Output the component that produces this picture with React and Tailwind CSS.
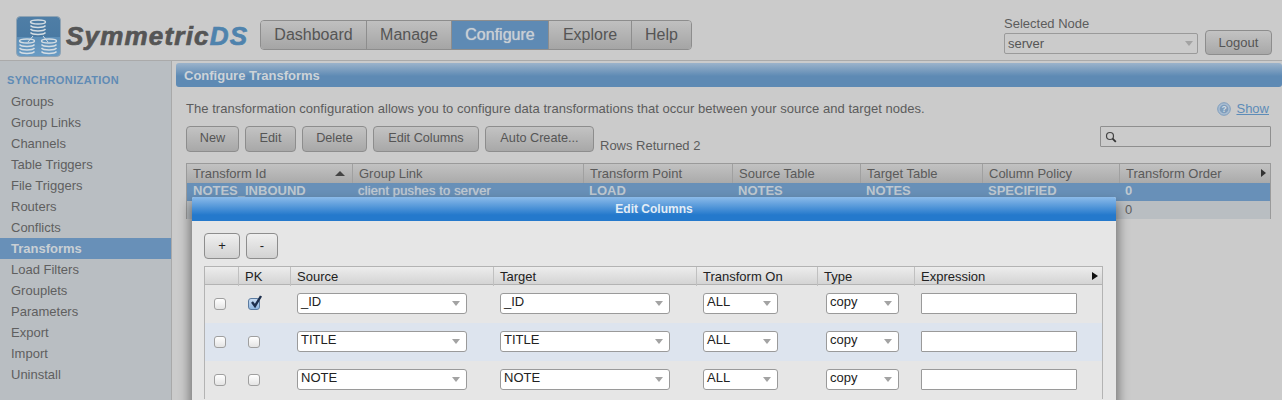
import React from "react";

const sidebarItems = ["Groups","Group Links","Channels","Table Triggers","File Triggers","Routers","Conflicts","Transforms","Load Filters","Grouplets","Parameters","Export","Import","Uninstall"];
const navItems = [["Dashboard","w-[105px]"],["Manage","w-[85px]"],["Configure","w-[97px]"],["Explore","w-[83px]"],["Help","w-[60px]"]];
const actions = [["New","w-[53px]"],["Edit","w-[51px]"],["Delete","w-[65px]"],["Edit Columns","w-[106px]"],["Auto Create...","w-[109px]"]];
const mainCols = ["Transform Id","Group Link","Transform Point","Source Table","Target Table","Column Policy","Transform Order"];
const mainRow = ["NOTES_INBOUND","client pushes to server","LOAD","NOTES","NOTES","SPECIFIED","0"];
const mainGrid = "grid grid-cols-[165px_231px_149px_128px_122px_137px_1fr]";
const editGrid = "grid grid-cols-[33px_52px_203px_203px_121px_97px_1fr]";

function Stack({ x, y }) {
  return (
    <g fill="none" stroke="#d5dde3" strokeWidth="1.4">
      <ellipse cx={x} cy={y} rx="7.5" ry="2" />
      <path d={`M${x-7.5} ${y+3.5}c2 2.6 13 2.6 15 0M${x-7.5} ${y+7}c2 2.6 13 2.6 15 0M${x-7.5} ${y+10.5}c2 2.6 13 2.6 15 0`} />
    </g>
  );
}

function Logo() {
  return (
    <div className="flex items-center w-[244px]">
      <svg width="45" height="41" viewBox="0 0 45 41" className="shrink-0">
        <defs>
          <linearGradient id="lg" x1="0" y1="0" x2="0" y2="1">
            <stop offset="0" stopColor="#4f7ea6" />
            <stop offset="0.5" stopColor="#4a7aa3" />
            <stop offset="0.52" stopColor="#5d8fb8" />
            <stop offset="1" stopColor="#6a9cc4" />
          </linearGradient>
        </defs>
        <rect x="0.5" y="0.5" width="44" height="40" rx="4" fill="url(#lg)" stroke="#8fa3b3" />
        <Stack x={22} y={6} />
        <Stack x={11} y={25} />
        <Stack x={33} y={25} />
        <path d="M17 20l-5 6M27 20l5 6" stroke="#d5dde3" strokeWidth="1" fill="none" />
      </svg>
      <span className="ml-[5px] text-[26px] leading-none font-bold italic tracking-[1.2px] text-[#555] [-webkit-text-stroke:0.7px_#555] font-['Liberation_Sans',sans-serif] whitespace-nowrap">
        Symmetric<span className="text-[#4f83ad] [-webkit-text-stroke:0.7px_#4f83ad]">DS</span>
      </span>
    </div>
  );
}

function Caret({ className = "" }) {
  return <span className={`w-0 h-0 border-l-[4.5px] border-r-[4.5px] border-t-[5px] border-l-transparent border-r-transparent border-t-[#a3a3a3] ${className}`} />;
}

function Btn({ children, className = "" }) {
  return (
    <button className={`h-[26px] rounded-[4px] border border-[#8d8d8d] bg-gradient-to-b from-[#c3c3c3] to-[#a8a8a8] text-[13px] text-[#555] flex items-center justify-center shrink-0 ${className}`}>
      {children}
    </button>
  );
}

function FakeSelect({ value, className }) {
  return (
    <div className={`h-[21px] bg-white border border-[#9a9a9a] rounded-[3px] flex items-center justify-between pl-[3px] pr-[6px] text-[13px] leading-none text-[#222] pb-[4px] ${className}`}>
      <span>{value}</span>
      <Caret className="mt-[3px]" />
    </div>
  );
}

function Check({ checked }) {
  return (
    <span className={`relative block w-[12px] h-[12px] rounded-[3px] border ${checked ? "bg-gradient-to-b from-[#c9dcf2] to-[#8fb6e0] border-[#5b7ba0]" : "bg-gradient-to-b from-[#ffffff] to-[#e4e4e4] border-[#9f9f9f]"}`}>
      {checked && (
        <svg viewBox="0 0 14 14" className="absolute left-[0px] top-[-4px] w-[14px] h-[14px]">
          <path d="M3 7l3 4 6-10" fill="none" stroke="#1d2f4d" strokeWidth="2.4" />
        </svg>
      )}
    </span>
  );
}

function EditRow({ value, pk, shaded }) {
  return (
    <div className={`${editGrid} h-[38px] items-center ${shaded ? "bg-[#dde4ee]" : ""}`}>
      <div className="pl-[9px]"><Check /></div>
      <div className="pl-[10px] pb-[1px]"><Check checked={pk} /></div>
      <div className="pl-[7px] pb-[1px]"><FakeSelect value={value} className="w-[170px]" /></div>
      <div className="pl-[7px] pb-[1px]"><FakeSelect value={value} className="w-[170px]" /></div>
      <div className="pl-[7px] pb-[1px]"><FakeSelect value="ALL" className="w-[75px]" /></div>
      <div className="pl-[9px] pb-[1px]"><FakeSelect value="copy" className="w-[73px]" /></div>
      <div className="pl-[7px] pb-[1px]"><div className="w-[156px] h-[21px] bg-white border border-[#9a9a9a] rounded-[1px]" /></div>
    </div>
  );
}

export default function App() {
  return (
    <div className="relative w-[1282px] h-[400px] overflow-hidden bg-[#cbcbcb] font-['Liberation_Sans',Arial,sans-serif] text-[#5c5c5c]">
      <header className="h-[60px] flex pl-[16px] pt-[12px]">
        <Logo />
        <nav className="mt-[8px] h-[30px] flex rounded-[4px] border border-[#8d8d8d] overflow-hidden self-start">
          {navItems.map(([label, w], i) => (
            <div key={label} className={`${w} flex items-center justify-center text-[16px] ${i ? "border-l border-[#8d8d8d]" : ""} ${label === "Configure" ? "bg-[#5e8ab4] text-[#c9cfd4] [text-shadow:0_0_1px_#c9cfd4]" : "bg-gradient-to-b from-[#c0c0c0] to-[#a5a5a5] text-[#555]"}`}>
              {label}
            </div>
          ))}
        </nav>
        <div className="ml-[312px] mt-[5px] w-[194px] shrink-0">
          <div className="text-[13px] leading-[14px] mb-[2px] text-[#5c5c5c]">Selected Node</div>
          <div className="h-[21px] border border-[#9a9a9a] rounded-[2px] flex items-center justify-between pl-[3px] pr-[4px] text-[13px] text-[#555]">
            <span>server</span>
            <Caret />
          </div>
        </div>
        <Btn className="ml-[7px] mt-[18px] w-[67px] !h-[25px]">Logout</Btn>
      </header>

      <div className="flex h-[340px] border-t border-[#aaaaaa]">
        <aside className="w-[172px] shrink-0 bg-[#b9bec2] border-r border-[#a9a9a9] pt-[11px]">
          <div className="pl-[7px] h-[17px] text-[11px] leading-[16px] font-bold tracking-[0.4px] text-[#5f8bb5]">SYNCHRONIZATION</div>
          <ul className="mt-[2px]">
            {sidebarItems.map((item) => (
              <li key={item} className={`h-[21px] leading-[21px] pl-[11px] text-[13px] ${item === "Transforms" ? "bg-[#6890b8] font-bold text-[#c9cfd4]" : "text-[#5f5f5f]"}`}>{item}</li>
            ))}
          </ul>
          <div className="pl-[7px] mt-[16px] text-[11px] font-bold tracking-[0.4px] text-[#5f8bb5]">CONSOLE</div>
        </aside>

        <main className="flex-1 min-w-0 pl-[4px] pt-[2px]">
          <div className="h-[24px] rounded-[3px] bg-[linear-gradient(#9bb3cb,#5e8ab4_55%)] pl-[8px] text-[13px] leading-[25px] font-bold text-[#cdd3d8]">Configure Transforms</div>
          <div className="pl-[10px] pr-[11px]">
            <div className="flex justify-between items-center mt-[13px] h-[18px]">
              <p className="text-[13px] tracking-[0.03px]">The transformation configuration allows you to configure data transformations that occur between your source and target nodes.</p>
              <div className="flex items-center gap-[5px] pr-[2px]">
                <svg width="14" height="14" viewBox="0 0 14 14">
                  <circle cx="7" cy="7" r="6.3" fill="#a9bdd2" stroke="#7e9dbd" />
                  <circle cx="7" cy="7" r="4.3" fill="#7f9dbb" />
                  <text x="7" y="10" textAnchor="middle" fontSize="8.5" fontWeight="700" fill="#d5dde5">?</text>
                </svg>
                <a className="text-[13px] underline text-[#5d8cb8]">Show</a>
              </div>
            </div>
            <div className="flex mt-[8px] h-[26px]">
              <div className="flex gap-[6px]">
                {actions.map(([label, w]) => <Btn key={label} className={`${w} !text-[12.7px]`}>{label}</Btn>)}
              </div>
              <span className="ml-[6px] mt-[12px] text-[13px] leading-[16px]">Rows Returned 2</span>
              <div className="ml-auto w-[171px] h-[21px] border border-[#8f8f8f] rounded-[1px] flex items-center pl-[4px]">
                <svg width="12" height="12" viewBox="0 0 12 12"><circle cx="5" cy="5" r="3.5" fill="none" stroke="#444" strokeWidth="1.2" /><path d="M7.6 7.6l3.2 3.2" stroke="#333" strokeWidth="1.8" /></svg>
              </div>
            </div>
            <div className="mt-[11px] border border-[#9a9a9a] border-b-0">
              <div className={`${mainGrid} h-[19px] bg-gradient-to-b from-[#c2c2c2] to-[#aaaaaa] text-[13px] leading-[19px] text-[#5a5a5a]`}>
                {mainCols.map((c, i) => (
                  <div key={c} className={`relative pl-[6px] ${i ? "border-l border-[#a0a0a0]" : ""}`}>
                    {c}
                    {i === 0 && <span className="absolute right-[7px] top-[7px] w-0 h-0 border-l-[5px] border-r-[5px] border-b-[5px] border-l-transparent border-r-transparent border-b-[#444]" />}
                    {i === 6 && <span className="absolute right-[4px] top-[5px] w-0 h-0 border-t-[4px] border-b-[4px] border-l-[5px] border-t-transparent border-b-transparent border-l-[#333]" />}
                  </div>
                ))}
              </div>
              <div className={`${mainGrid} h-[18px] bg-[#6890b8] text-[13px] leading-[16px] font-bold text-[#bfc8d0]`}>
                {mainRow.map((c, i) => <div key={i} className={`pl-[6px] whitespace-nowrap ${i === 1 ? "font-normal tracking-[0.13px] [text-shadow:0_0_1px_#bfc8d0]" : ""}`}>{c}</div>)}
              </div>
              <div className={`${mainGrid} h-[18px] bg-[#b9bec2] text-[13px] leading-[17px] text-[#5f5f5f]`}>
                {mainRow.map((_, i) => <div key={i} className="pl-[6px]">{i === 6 ? "0" : ""}</div>)}
              </div>
            </div>
          </div>
        </main>
      </div>

      <section className="absolute left-[192px] top-[197px] w-[924px] h-[240px] bg-[#e6e6e6] rounded-t-[2px] shadow-[0_8px_12px_2px_rgba(0,0,0,0.45)] text-[#222]">
        <div className="h-[24px] rounded-t-[2px] bg-[linear-gradient(#8cbbe9,#2479cc_75%)] text-center text-[12px] leading-[24px] font-bold text-[#e3edf6]">Edit Columns</div>
        <div className="px-[12px]">
          <div className="flex gap-[6px] mt-[12px]">
            <Btn className="w-[36px] !text-[#222] !from-[#efefef] !to-[#d2d2d2]">+</Btn>
            <Btn className="w-[32px] !text-[#222] !from-[#efefef] !to-[#d2d2d2]">-</Btn>
          </div>
          <div className="mt-[7px] w-[899px] border-x border-t border-[#b3b3b3]">
            <div className={`${editGrid} h-[18px] bg-gradient-to-b from-[#ededed] to-[#d4d4d4] border-b border-[#b3b3b3] text-[13px] leading-[19px] text-[#222]`}>
              {["", "PK", "Source", "Target", "Transform On", "Type", "Expression"].map((c, i) => (
                <div key={i} className={`relative pl-[6px] ${i ? "border-l border-[#c0c0c0]" : ""}`}>
                  {c}
                  {i === 6 && <span className="absolute right-[4px] top-[5px] w-0 h-0 border-t-[4px] border-b-[4px] border-l-[6px] border-t-transparent border-b-transparent border-l-[#111]" />}
                </div>
              ))}
            </div>
            <EditRow value="_ID" pk />
            <EditRow value="TITLE" shaded />
            <EditRow value="NOTE" />
          </div>
        </div>
      </section>
    </div>
  );
}
